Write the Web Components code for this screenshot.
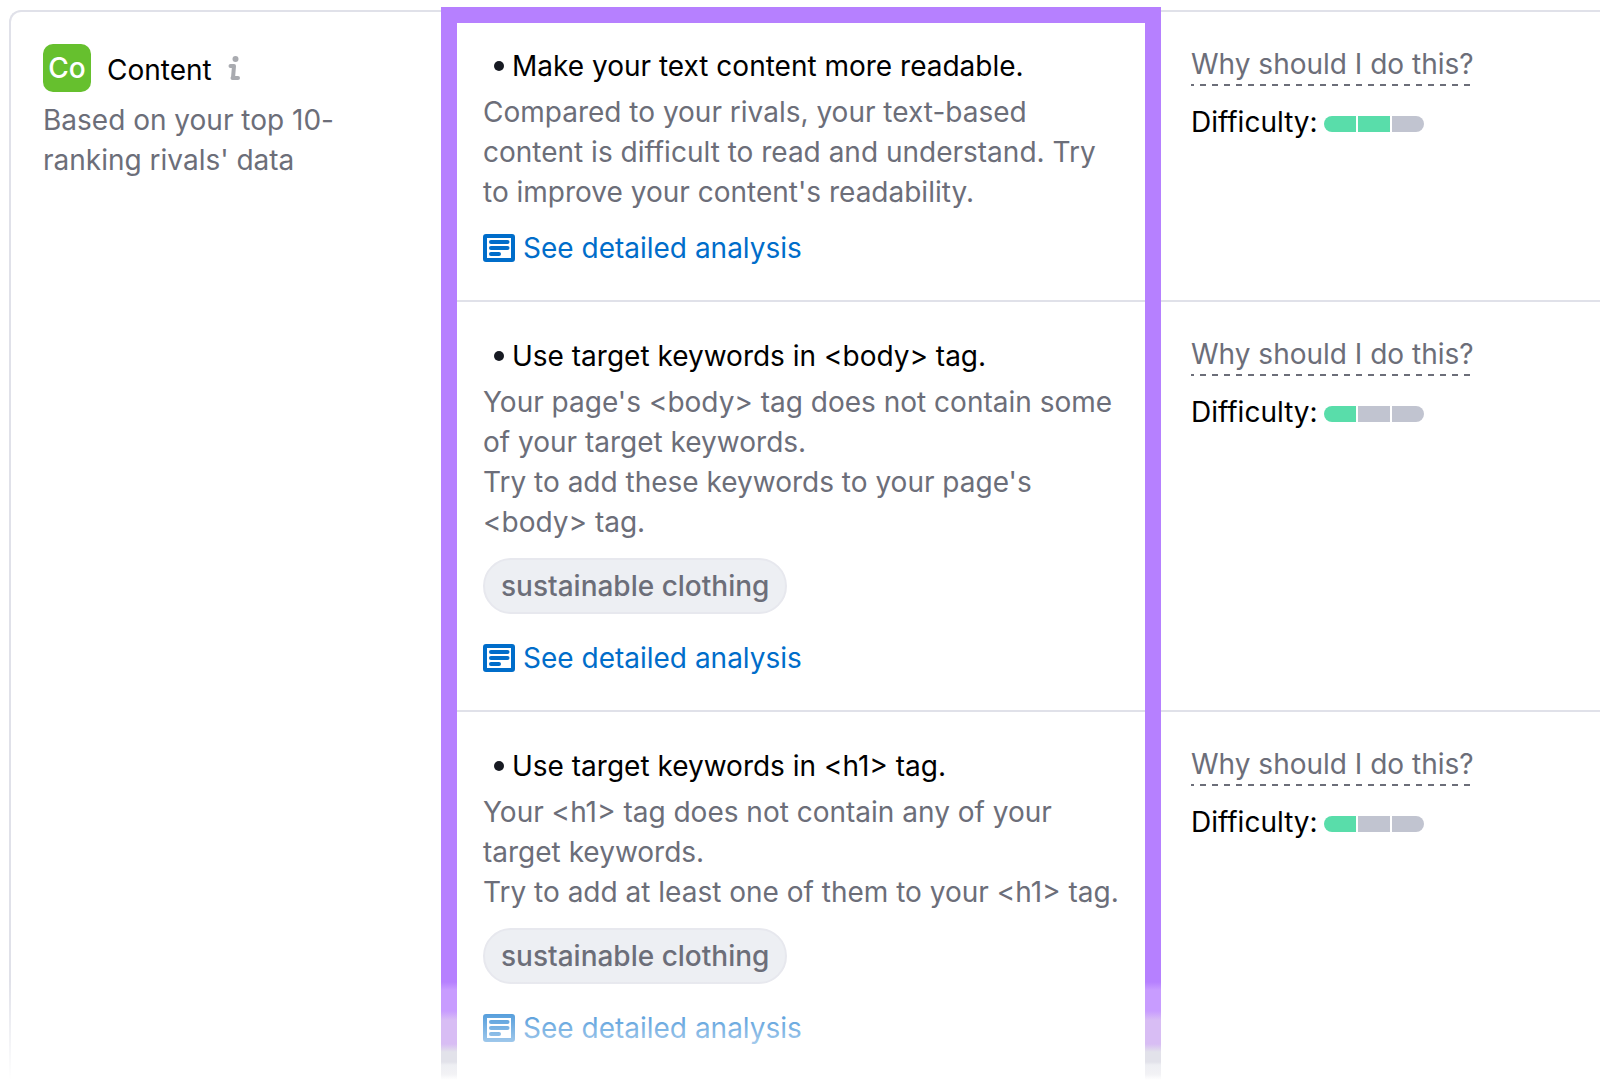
<!DOCTYPE html>
<html lang="en">
<head>
<meta charset="utf-8">
<meta name="viewport" content="width=device-width, initial-scale=1">
<title>Content ideas</title>
<style>
  body {
    margin: 0;
    background: #fff;
    color: #000;
    font: 400 28px/40px Inter, "Liberation Sans", sans-serif;
    --muted: #6c6e79;
    --link: #006dca;
    --line: #e0e1e9;
    --accent: #b680ff;
  }
</style>
</head>
<body>
<idea-card>
  <category-summary slot="category" code="Co" name="Content">Based on your top 10-ranking rivals' data</category-summary>
  <idea-row heading="Make your text content more readable." level="2">
    Compared to your rivals, your text-based content is difficult to read and understand. Try to improve your content's readability.
  </idea-row>
  <idea-row heading="Use target keywords in &lt;body&gt; tag." level="1">
    Your page's &lt;body&gt; tag does not contain some of your target keywords.<br>Try to add these keywords to your page's &lt;body&gt; tag.
    <keyword-chip slot="keywords">sustainable clothing</keyword-chip>
  </idea-row>
  <idea-row heading="Use target keywords in &lt;h1&gt; tag." level="1">
    Your &lt;h1&gt; tag does not contain any of your target keywords.<br>Try to add at least one of them to your &lt;h1&gt; tag.
    <keyword-chip slot="keywords">sustainable clothing</keyword-chip>
  </idea-row>
</idea-card>

<script>
  const define = (name, markup, setup) => {
    const template = document.createElement('template');
    template.innerHTML = markup;
    customElements.define(name, class extends HTMLElement {
      constructor() {
        super();
        this.attachShadow({ mode: 'open' }).append(template.content.cloneNode(true));
      }
      connectedCallback() {
        if (setup) setup(this, this.shadowRoot);
      }
    });
  };

  // Card: category column, then one row per idea; the ideas column is framed.
  define('idea-card', `
    <style>
      :host { display: block; padding: 10px 0 0 9px; overflow: hidden; }
      section {
        position: relative;
        display: grid;
        grid-template-columns: 430fr 720fr 439fr;
        border: 2px solid var(--line);
        border-width: 2px 0 0 2px;
        border-top-left-radius: 12px;
      }
      .category { grid-column: 1; grid-row: 1 / span 3; }
      .fade {
        position: absolute; inset: auto 0 0 -2px; height: 100px;
        background: linear-gradient(#fff0, #fff);
        pointer-events: none;
      }
      .frame {
        position: absolute; inset: -5px 0 0; grid-column: 2 / 3;
        border: 16px solid var(--accent);
        border-bottom-width: 0;
        border-image: linear-gradient(var(--accent) calc(100% - 98px), #c89cff calc(100% - 90px), #c89cff calc(100% - 69px), #d8bdf4 calc(100% - 60px), #d8bdf4 calc(100% - 36px), #e2e2ea calc(100% - 28px), #e2e2ea calc(100% - 18px), #eeeff3 calc(100% - 15px), #f2f2f5 calc(100% - 6px), #fff) 16 16 0;
        pointer-events: none;
      }
    </style>
    <section>
      <div class="category"><slot name="category"></slot></div>
      <slot></slot>
      <div class="fade"></div>
      <div class="frame"></div>
    </section>`);

  define('category-summary', `
    <style>
      :host { display: block; padding: 32px; }
      header { display: flex; align-items: center; gap: 16px; }
      .badge {
        width: 48px; height: 48px; border-radius: 10px;
        background: #66c02e; color: #fff;
        line-height: 48px; text-align: center; font-weight: 500;
      }
      h2 { margin: 0; padding-top: 4px; font: inherit; }
      button { display: flex; padding: 0; border: 0; background: none; }
      p { margin: 8px 0 0; color: var(--muted); max-width: 320px; }
    </style>
    <header>
      <span class="badge"></span>
      <h2></h2>
      <button type="button" aria-label="About this category">
        <svg width="12" height="24" viewBox="0 0 12 24" fill="none" stroke="#a9abb0" stroke-width="4" stroke-linecap="round" stroke-linejoin="round">
          <circle cx="7.500" cy="3" r="3" fill="#a9abb0" stroke="none"/>
          <path d="M2.500 10H6L5 22M4.500 22H10"/>
        </svg>
      </button>
    </header>
    <p><slot></slot></p>`, (host, root) => {
      root.querySelector('.badge').textContent = host.getAttribute('code');
      root.querySelector('h2').textContent = host.getAttribute('name');
    });

  define('keyword-chip', `
    <style>
      :host {
        display: block; box-sizing: border-box; height: 56px; padding: 6px 16px;
        border: 2px solid #e7e8ee; border-radius: 28px;
        background: #edeff3; color: var(--muted); font-weight: 500;
      }
    </style>
    <slot></slot>`);

  define('analysis-link', `
    <style>
      :host { display: flex; }
      a { display: flex; align-items: center; gap: 8px; color: var(--link); text-decoration: none; }
    </style>
    <a href="#analysis">
      <svg width="32" height="28" viewBox="0 0 32 28" fill="none" stroke="currentColor">
        <rect x="2" y="2" width="28" height="24" rx="1" stroke-width="4"/>
        <path d="M8 8H24.500M8 14H24.500M8 20H16" stroke-width="4" stroke-linecap="round"/>
      </svg>
      <span>See detailed analysis</span>
    </a>`);

  define('difficulty-meter', `
    <style>
      :host { display: flex; align-items: center; gap: 6px; }
      .bar { display: flex; gap: 2px; margin-top: 4px; border-radius: 8px; overflow: hidden; }
      i { width: 32px; height: 16px; background: #c1c4d0; }
      i.on { background: #59ddaa; }
    </style>
    <span id="label">Difficulty:</span>
    <div class="bar" role="meter" aria-labelledby="label" aria-valuemin="0" aria-valuemax="3"><i></i><i></i><i></i></div>`,
    (host, root) => {
      const level = Number(host.getAttribute('level'));
      root.querySelector('.bar').setAttribute('aria-valuenow', level);
      root.querySelectorAll('i').forEach((part, n) => part.classList.toggle('on', n < level));
    });

  define('idea-row', `
    <style>
      :host {
        display: grid; grid-column: 2 / 4; grid-template-columns: subgrid;
        border-bottom: 2px solid var(--line);
      }
      :host(:last-of-type) { border-bottom: 0; }
      .idea { padding: 34px 32px 32px 42px; }
      h3 { display: flex; align-items: center; gap: 8px; margin: 0 0 6px; padding-left: 11px; font: inherit; }
      h3::before { content: ""; width: 10px; height: 10px; border-radius: 50%; background: #171a22; }
      p { margin: 0 0 16px; color: var(--muted); }
      .keywords { display: flex; flex-wrap: wrap; gap: 8px; }
      .keywords:not([hidden]) { margin-bottom: 24px; }
      .keywords[hidden] { display: none; }
      .effort { display: flex; flex-direction: column; align-items: flex-start; gap: 16px; padding: 32px 30px; }
      button {
        padding: 0 0 2px; border: 0; color: var(--muted); font: inherit;
        background: repeating-linear-gradient(90deg, var(--muted) 0 3px, #fff0 3px 9px, var(--muted) 9px 12px) bottom / 100% 2px no-repeat;
      }
    </style>
    <div class="idea">
      <h3><span class="heading"></span></h3>
      <p><slot></slot></p>
      <div class="keywords"><slot name="keywords"></slot></div>
      <analysis-link></analysis-link>
    </div>
    <div class="effort">
      <button type="button">Why should I do this?</button>
      <difficulty-meter></difficulty-meter>
    </div>`, (host, root) => {
      root.querySelector('.heading').textContent = host.getAttribute('heading');
      root.querySelector('.keywords').hidden = !host.querySelector('[slot=keywords]');
      const meter = root.querySelector('difficulty-meter');
      meter.setAttribute('level', host.getAttribute('level'));
      meter.connectedCallback();
    });
</script>
</body>
</html>
